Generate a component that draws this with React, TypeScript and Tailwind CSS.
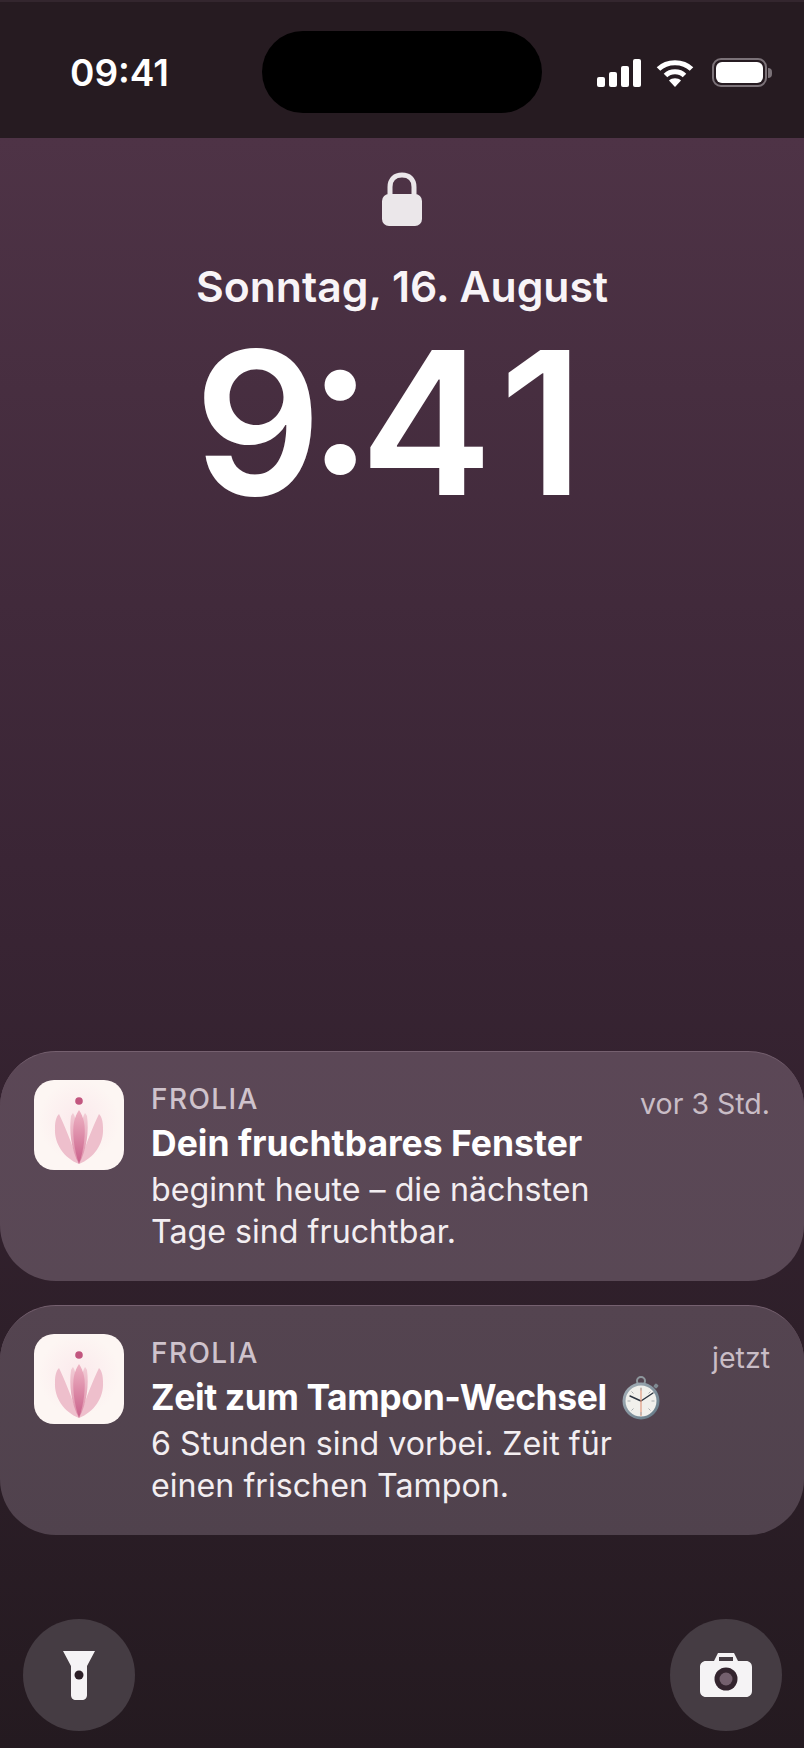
const FroliaLogo = () => (
  <svg viewBox="0 0 90 90" className="w-[90px] h-[90px]">
    <defs>
      <radialGradient id="glow" cx="50%" cy="45%" r="45%">
        <stop offset="0%" stopColor="#fbe9ec" />
        <stop offset="100%" stopColor="#fdf6f3" />
      </radialGradient>
      <linearGradient id="mid" x1="0" y1="0" x2="0" y2="1">
        <stop offset="0%" stopColor="#eeb4c4" />
        <stop offset="100%" stopColor="#c9608a" />
      </linearGradient>
      <linearGradient id="inner" x1="0" y1="0" x2="0" y2="1">
        <stop offset="0%" stopColor="#f2cdd6" />
        <stop offset="100%" stopColor="#dc8aa6" />
      </linearGradient>
    </defs>
    <rect width="90" height="90" fill="url(#glow)" />
    <path d="M45 84 C30 78 20 64 21 48 C21 42 22 37 25 34 C30 44 38 64 45 84Z" fill="#eebfcc" />
    <path d="M45 84 C60 78 70 64 69 48 C69 42 68 37 65 34 C60 44 52 64 45 84Z" fill="#eebfcc" />
    <path d="M45 84 C37 70 35 50 37 36 C38 34 39 33 39 33 C41 36 42 40 42 44 C42 60 44 72 45 84Z" fill="url(#inner)" />
    <path d="M45 84 C53 70 55 50 53 36 C52 34 51 33 51 33 C49 36 48 40 48 44 C48 60 46 72 45 84Z" fill="url(#inner)" />
    <path d="M45 84 C40 70 38 52 40 42 C41 37 43 33 45 30 C47 33 49 37 50 42 C52 52 50 70 45 84Z" fill="url(#mid)" />
    <circle cx="45" cy="21" r="3.8" fill="#c2567f" />
  </svg>
);

const Stopwatch = () => (
  <svg viewBox="0 0 40 44" className="w-[40px] h-[44px]">
    <defs>
      <linearGradient id="ring" x1="0" y1="0" x2="1" y2="1">
        <stop offset="0%" stopColor="#aab4bc" />
        <stop offset="100%" stopColor="#5f7684" />
      </linearGradient>
    </defs>
    <circle cx="20" cy="5" r="4" fill="none" stroke="#8e979d" strokeWidth="2" />
    <rect x="17" y="7" width="6" height="4" fill="#8e979d" />
    <rect x="33" y="8" width="4" height="4" rx="1" fill="#7f8a92" transform="rotate(40 35 10)" />
    <circle cx="20" cy="25" r="18.5" fill="url(#ring)" />
    <circle cx="20" cy="25" r="15.5" fill="#f1f0ec" />
    <path d="M20 25 L9 20 M20 25 L32 17" stroke="#2c3440" strokeWidth="1.4" strokeLinecap="round" />
    <path d="M20 12 V40" stroke="#e39a80" strokeWidth="1.2" />
    <path d="M20 11.5v3M20 36v3M6.5 25h3M30.5 25h3M10.5 15.5l2 2M29.5 15.5l-2 2M10.5 34.5l2-2M29.5 34.5l-2-2" stroke="#a9aeb0" strokeWidth="1" />
  </svg>
);

type NotificationProps = { title: string; line1: string; line2: string; time: string; emoji?: boolean; tone: string };

const Notification = ({ title, line1, line2, time, emoji, tone }: NotificationProps) => (
  <div className={`flex h-[230px] rounded-[56px] border-t border-[#75606f] pl-[34px] pr-[34px] pt-[28px] ${tone}`}>
    <div className="w-[90px] h-[90px] rounded-[20px] overflow-hidden shrink-0">
      <FroliaLogo />
    </div>
    <div className="ml-[27px] pt-[1px] flex-1 min-w-0">
      <div className="flex items-start justify-between">
        <div className="text-[28px] leading-[36px] font-medium tracking-[1.4px] text-[#cfc3cc]">FROLIA</div>
        <div className="text-[28.5px] leading-[36px] mt-[5px] text-[#c9bdc6]">{time}</div>
      </div>
      <div className={`flex items-center h-[44px] text-[35.5px] font-bold text-white whitespace-nowrap ${emoji ? 'tracking-[-0.4px]' : ''}`}>
        <span>{title}</span>
        {emoji && <span className="ml-[14px]"><Stopwatch /></span>}
      </div>
      <div className="mt-[3px] text-[32.2px] leading-[42px] text-[#f3eef1] whitespace-nowrap">
        <div>{line1}</div>
        <div>{line2}</div>
      </div>
    </div>
  </div>
);

export default function App() {
  return (
    <div className="flex flex-col h-[1748px] w-[804px] overflow-hidden bg-[#241a20] font-['Inter',sans-serif] text-white">
      {/* Status bar */}
      <div className="relative flex h-[138px] shrink-0 items-start justify-between border-t-2 border-[#33262e] bg-[#261b21] pl-[70px] pr-[32px] pt-[49px]">
        <div className="text-[37px] leading-[44px] font-semibold">09:41</div>
        <div className="absolute left-[262px] top-[29px] h-[82px] w-[280px] rounded-full bg-black"></div>
        <div className="flex items-center pt-[7px]">
          <svg width="44" height="28" viewBox="0 0 44 28" fill="white">
            <rect x="0" y="18" width="8" height="10" rx="2" />
            <rect x="12" y="13" width="8" height="15" rx="2" />
            <rect x="24" y="7" width="8" height="21" rx="2" />
            <rect x="36" y="0" width="8" height="28" rx="2" />
          </svg>
          <svg width="38" height="28" viewBox="0 0 38 28" fill="none" stroke="white" strokeWidth="5" className="ml-[15px]">
            <path d="M2.5 10 C11 1.5 27 1.5 35.5 10" />
            <path d="M9.5 16.5 C14.5 11.5 23.5 11.5 28.5 16.5" />
            <path d="M19 28 L13 21.5 C16 18.5 22 18.5 25 21.5 Z" fill="white" stroke="none" />
          </svg>
          <div className="ml-[18px] flex items-center">
            <div className="h-[29px] w-[55px] rounded-[9px] border-2 border-[#7b7278] p-[2px]">
              <div className="h-full w-full rounded-[6px] bg-white"></div>
            </div>
            <div className="ml-[1px] h-[10px] w-[4px] rounded-r-full bg-[#7b7278]"></div>
          </div>
        </div>
      </div>

      {/* Lock screen */}
      <div className="flex flex-1 flex-col bg-gradient-to-b from-[#4e3346] via-[#3a2535] via-45% to-[#241a20]">
        <div className="flex flex-col items-center pt-[34px]">
          <svg width="40" height="54" viewBox="0 0 40 54" fill="#ebe7ea">
            <path d="M8 24 V15 C8 7 13 3 20 3 C27 3 32 7 32 15 V24" fill="none" stroke="#ebe7ea" strokeWidth="5" />
            <rect x="0" y="22" width="40" height="32" rx="7" />
          </svg>
          <div className="mt-[36px] text-[42.7px] leading-[50px] font-semibold text-[#f8f4f7]">Sonntag, 16. August</div>
          <div className="mt-[16px] mr-[26px] flex h-[190px] items-center text-[199px] leading-[190px] font-semibold">
            <span className="tracking-[-13px]">9</span>
            <span className="mb-[44px] tracking-[-12px]">:</span>
            <span className="tracking-[7px]">4</span>
            <span>1</span>
          </div>
        </div>

        <div className="mt-auto flex flex-col gap-[24px]">
          <Notification tone="bg-gradient-to-b from-[#5b4756] to-[#594855]" title="Dein fruchtbares Fenster" line1="beginnt heute – die nächsten" line2="Tage sind fruchtbar." time="vor 3 Std." />
          <Notification tone="bg-gradient-to-b from-[#544450] to-[#50424d]" title="Zeit zum Tampon-Wechsel" line1="6 Stunden sind vorbei. Zeit für" line2="einen frischen Tampon." time="jetzt" emoji />
        </div>

        <div className="flex justify-between pl-[23px] pr-[22px] pt-[84px] pb-[17px]">
          <div className="flex h-[112px] w-[112px] items-center justify-center rounded-full bg-[#453c43]">
            <svg width="32" height="49" viewBox="0 0 32 49" fill="#f5f3f5">
              <path d="M0 0 H32 L24 15 V44 C24 47 22 49 19 49 H13 C10 49 8 47 8 44 V15 Z" />
              <circle cx="16" cy="24" r="4.5" fill="#2c1f27" />
            </svg>
          </div>
          <div className="flex h-[112px] w-[112px] items-center justify-center rounded-full bg-[#453c43]">
            <svg width="52" height="44" viewBox="0 0 52 44" fill="#f5f3f5">
              <path d="M18 0 H34 L38 8 H46 C49.5 8 52 10.5 52 14 V38 C52 41.5 49.5 44 46 44 H6 C2.5 44 0 41.5 0 38 V14 C0 10.5 2.5 8 6 8 H14 Z" />
              <rect x="19" y="4" width="14" height="4" fill="#453c43" />
              <circle cx="26" cy="26" r="11.5" fill="#33242e" />
              <circle cx="26" cy="26" r="6.5" fill="#74606e" />
            </svg>
          </div>
        </div>
      </div>
    </div>
  );
}
